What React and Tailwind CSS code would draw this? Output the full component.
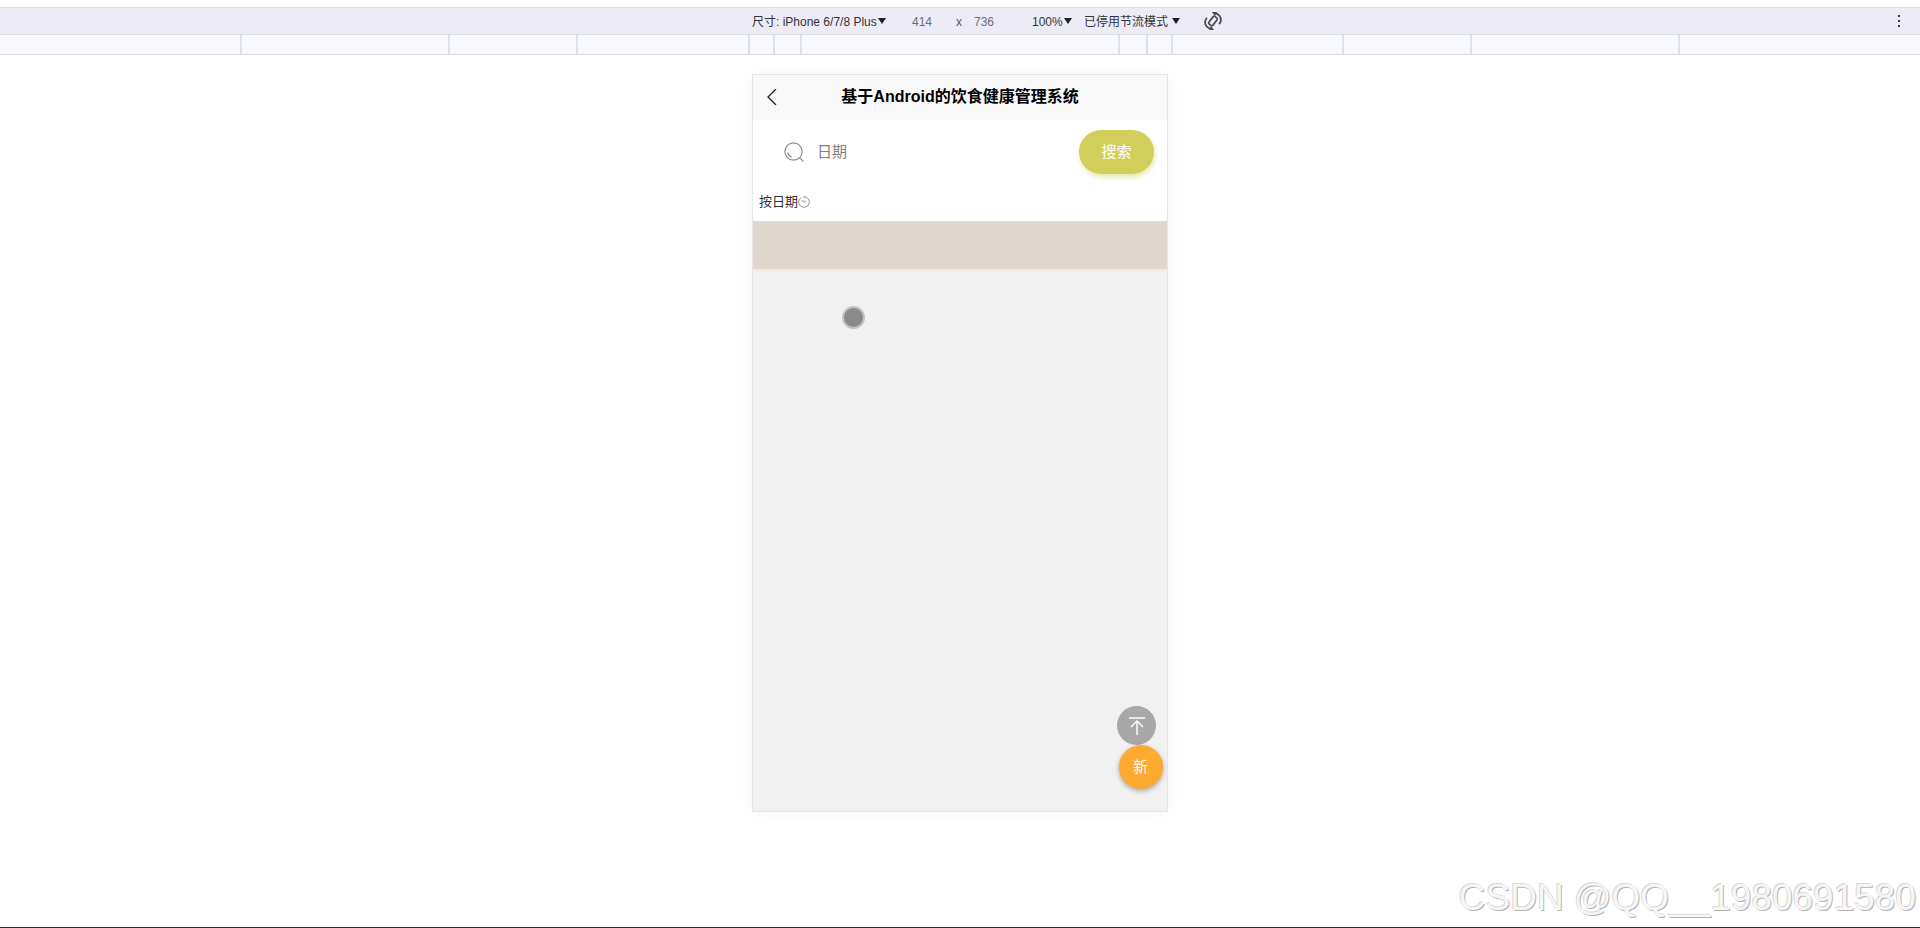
import { useState } from "react";

const FONT = "font-['Open_Sans','Noto_Sans_CJK_SC',sans-serif]";

function ToolbarSelect({ label, value, className }) {
  return (
    <span className={`${className} relative flex shrink-0 items-center`}>
      <select
        aria-label={label}
        defaultValue={value}
        className="h-5 w-full appearance-none bg-transparent text-xs text-[#333338] outline-none"
      >
        <option>{value}</option>
      </select>
      <svg className="pointer-events-none absolute right-0 top-1.5 h-1.5 w-2" viewBox="0 0 8 6" fill="#1f1f24">
        <path d="M0 0h8L4 6z" />
      </svg>
    </span>
  );
}

function RotateIcon() {
  return (
    <svg className="h-5 w-5" viewBox="0 0 20 20" fill="none" stroke="#4a4a50" strokeWidth="1.7">
      <rect x="7.5" y="5.2" width="5" height="9.600" rx="1.5" transform="rotate(38 10 10)" />
      <path d="M10.500 2.200C15 2 18.600 5.500 17.800 10c-.3 1.400-1 2.400-1.800 3.200" />
      <path d="M9.500 17.800C5 18 1.400 14.500 2.200 10c.3-1.400 1-2.400 1.800-3.200" />
      <path d="M8.800 1h5l-1.600 4zM11.200 19h-5l1.600-4z" fill="#4a4a50" stroke="none" />
    </svg>
  );
}

function DeviceToolbar() {
  const [size, setSize] = useState({ width: "414", height: "736" });
  return (
    <div className="mt-[7px] grid h-7 grid-cols-[1fr_416px_1fr] items-center border-y border-[#dcdce6] bg-[#edecf6] font-['Liberation_Sans','Noto_Sans_CJK_SC',sans-serif]">
      <div className="col-start-2 flex items-center whitespace-nowrap pt-px">
        <ToolbarSelect label="尺寸" value="尺寸: iPhone 6/7/8 Plus" className="w-[134px]" />
        <input
          aria-label="宽度"
          className="ml-[18px] w-9 bg-transparent text-center text-xs text-[#6b6b72] outline-none"
          value={size.width}
          onChange={(e) => setSize({ ...size, width: e.target.value })}
        />
        <span className="ml-4 w-2 text-center text-xs text-[#55555c]">x</span>
        <input
          aria-label="高度"
          className="ml-1 w-9 bg-transparent text-center text-xs text-[#6b6b72] outline-none"
          value={size.height}
          onChange={(e) => setSize({ ...size, height: e.target.value })}
        />
        <ToolbarSelect label="缩放" value="100%" className="ml-[30px] w-10" />
        <ToolbarSelect label="节流" value="已停用节流模式" className="ml-3 w-24" />
      </div>
      <div className="flex items-center justify-between pl-[35px] pr-[13px]">
        <button aria-label="旋转">
          <RotateIcon />
        </button>
        <button aria-label="更多选项" className="flex w-4 flex-col items-center gap-[3px]">
          <i className="h-0.5 w-0.5 bg-[#3c3c42]" />
          <i className="h-0.5 w-0.5 bg-[#3c3c42]" />
          <i className="h-0.5 w-0.5 bg-[#3c3c42]" />
        </button>
      </div>
    </div>
  );
}

// width breakpoints, mirrored around the device
const SEGMENTS = [
  "w-[208px]",
  "w-[128px]",
  "w-[172px]",
  "w-[25px]",
  "w-[27px]",
  "w-[318px]",
  "w-7",
  "w-[25px]",
  "w-[171px]",
  "w-[128px]",
  "w-[208px]",
];

function Ruler() {
  return (
    <div className="flex h-5 border-b border-[#d9dbe6] bg-[#f7f9fd]">
      <div className="flex-1" />
      {SEGMENTS.map((width, i) => (
        <div key={i} className={`${width} shrink-0 border-l-2 border-[#dcdff0]`} />
      ))}
      <div className="flex-1 border-l-2 border-[#dcdff0]" />
    </div>
  );
}

function Phone() {
  const [date, setDate] = useState("");
  return (
    <main className="relative flex h-[738px] w-[416px] flex-col border border-[#e6e6e8] bg-[#f1f1f1] shadow-[0_0_16px_rgba(0,0,0,0.04)]">
      <header className="grid h-[45px] shrink-0 grid-cols-[44px_1fr_44px] items-center bg-[#f9f9f9] pb-0.5">
        <button aria-label="返回" className="pl-3.5">
          <svg className="h-4 w-2.5" viewBox="0 0 10 16" fill="none" stroke="#222" strokeWidth="1.3">
            <path d="M9 0 1 8l8 8" />
          </svg>
        </button>
        <h1 className="text-center font-['Liberation_Sans','Noto_Sans_CJK_SC',sans-serif] text-base font-bold text-black">
          基于Android的饮食健康管理系统
        </h1>
      </header>

      <form className="flex items-center bg-white py-2.5 pl-[31px] pr-[13px]" onSubmit={(e) => e.preventDefault()}>
        <svg className="h-5 w-5 shrink-0" viewBox="0 0 20 20" fill="none" stroke="#8c8c8c" strokeWidth="1.2">
          <circle cx="9.500" cy="9.500" r="8.600" />
          <path d="m15.600 15.600 4 4M3.600 10.500c.5 2.400 2 4 4.200 4.600" />
        </svg>
        <input
          aria-label="日期"
          placeholder="日期"
          value={date}
          onChange={(e) => setDate(e.target.value)}
          className="ml-[13px] min-w-0 flex-1 pb-0.5 text-[15px] outline-none placeholder:text-[#808080]"
        />
        <button className="h-11 w-[75px] rounded-full bg-[#d1cf5c] pb-0.5 text-[15px] text-white shadow-[1px_3px_5px_rgba(209,207,92,0.5)]">
          搜索
        </button>
      </form>

      <div className="flex h-[37px] shrink-0 items-center bg-white pb-0.5 pl-1.5">
        <button className="flex items-center text-[13px] text-[#333]">
          按日期
          <svg className="h-3 w-3" viewBox="0 0 12 12" fill="none" stroke="#777" strokeWidth="0.8">
            <path d="M3.200 1.500A5.300 5.300 0 1 0 6 .7v1.600" />
            <path d="M3.500 3.800 6 6.300l2.200-1.600" />
          </svg>
        </button>
      </div>

      <div className="h-[50px] shrink-0 border-b-2 border-[#f6e9da] bg-[#e0d8cf]" />

      <div className="absolute bottom-[22px] right-[3px] flex flex-col items-center">
        <button aria-label="回到顶部" className="mr-2 flex h-[39px] w-[39px] items-center justify-center rounded-full bg-[#a8a8a8]">
          <svg className="h-[18px] w-4" viewBox="0 0 16 18" fill="none" stroke="#fff" strokeWidth="1.4">
            <path d="M0 1h16M8 18V4M2 10l6-6 6 6" />
          </svg>
        </button>
        <button className="h-11 w-11 rounded-full bg-[#fea92f] pb-0.5 text-[15px] text-white shadow-[0_2px_5px_rgba(0,0,0,0.3)]">
          新
        </button>
      </div>

      {/* touch pointer */}
      <span className="absolute left-[89px] top-[231px] h-[23px] w-[23px] rounded-full border-2 border-[#c4c4c4] bg-[#8a8a8a]" />
    </main>
  );
}

export default function App() {
  return (
    <div className={`relative flex min-h-screen flex-col border-b border-[#2b2b2b] bg-white ${FONT}`}>
      <DeviceToolbar />
      <Ruler />
      <div className="flex flex-1 items-start justify-center pt-[19px]">
        <Phone />
      </div>
      <p className="absolute bottom-0.5 right-1 font-['Liberation_Sans',sans-serif] text-[37px] text-[#f6f6f6] [text-shadow:-1px_-1px_0_#d8d8d8,1px_1px_0_#b4b4b4]">
        CSDN @QQ__1980691580
      </p>
    </div>
  );
}
